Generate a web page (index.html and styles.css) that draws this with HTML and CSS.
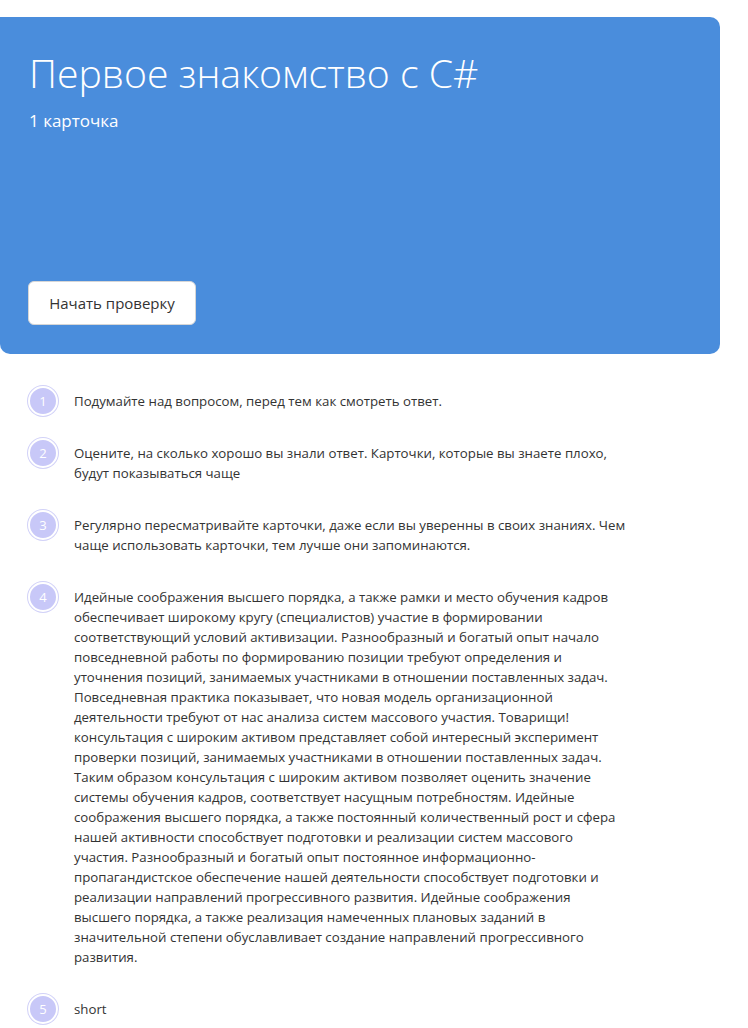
FILE: index.html
```html
<!DOCTYPE html>
<html lang="ru">
<head>
<meta charset="utf-8">
<title>Первое знакомство с C#</title>
<link rel="stylesheet" href="styles.css">
</head>
<body>
<div class="page">
  <section class="hero">
    <div class="hero-top">
      <h1 class="hero-title">Первое знакомство с C#</h1>
      <div class="hero-count">1 карточка</div>
    </div>
    <button class="start-btn">Начать проверку</button>
  </section>
  <ol class="tips">
    <li class="tip"><span class="num">1</span><p class="tip-text">Подумайте над вопросом, перед тем как смотреть ответ.</p></li>
    <li class="tip"><span class="num">2</span><p class="tip-text">Оцените, на сколько хорошо вы знали ответ. Карточки, которые вы знаете плохо, будут показываться чаще</p></li>
    <li class="tip"><span class="num">3</span><p class="tip-text">Регулярно пересматривайте карточки, даже если вы уверенны в своих знаниях. Чем чаще использовать карточки, тем лучше они запоминаются.</p></li>
    <li class="tip"><span class="num">4</span><p class="tip-text">Идейные соображения высшего порядка, а также рамки и место обучения кадров обеспечивает широкому кругу (специалистов) участие в формировании соответствующий условий активизации. Разнообразный и богатый опыт начало повседневной работы по формированию позиции требуют определения и уточнения позиций, занимаемых участниками в отношении поставленных задач. Повседневная практика показывает, что новая модель организационной деятельности требуют от нас анализа систем массового участия. Товарищи! консультация с широким активом представляет собой интересный эксперимент проверки позиций, занимаемых участниками в отношении поставленных задач. Таким образом консультация с широким активом позволяет оценить значение системы обучения кадров, соответствует насущным потребностям. Идейные соображения высшего порядка, а также постоянный количественный рост и сфера нашей активности способствует подготовки и реализации систем массового участия. Разнообразный и богатый опыт постоянное информационно-пропагандистское обеспечение нашей деятельности способствует подготовки и реализации направлений прогрессивного развития. Идейные соображения высшего порядка, а также реализация намеченных плановых заданий в значительной степени обуславливает создание направлений прогрессивного развития.</p></li>
    <li class="tip"><span class="num">5</span><p class="tip-text">short</p></li>
  </ol>
</div>
</body>
</html>
```
FILE: styles.css
```css
* { box-sizing: border-box; }
html, body { margin: 0; padding: 0; background: #fff; }
body { font-family: "Open Sans", "Noto Sans", sans-serif; color: #333; }
.page { padding: 17px 28px 0 0; }
.hero {
  background: #4a8ddc;
  border-radius: 0 10px 10px 10px;
  height: 337px;
  padding: 32px 29px 29px 28px;
  display: flex;
  flex-direction: column;
  justify-content: space-between;
  align-items: flex-start;
}
.hero-title {
  margin: 0;
  font-weight: 300;
  font-size: 39.2px;
  line-height: 48px;
  color: #fff;
  padding-left: 1px;
}
.hero-count {
  margin-top: 12px;
  font-size: 17px;
  line-height: 24px;
  color: #fff;
  padding-left: 1px;
}
.start-btn {
  font-family: inherit;
  font-size: 15px;
  color: #333;
  background: #fff;
  border: 1px solid #d6d6d6;
  border-radius: 6px;
  width: 168px;
  height: 44px;
  padding: 0;
}
.tips {
  list-style: none;
  margin: 32px 0 0 0;
  padding: 0 0 0 28px;
}
.tip {
  display: flex;
  align-items: flex-start;
  gap: 16px;
  margin-bottom: 20px;
}
.num {
  flex: none;
  width: 30px;
  height: 30px;
  border-radius: 50%;
  background: #c8c8f8;
  border: 2px solid #fff;
  box-shadow: 0 0 0 1px #d2d2f8;
  color: #fff;
  font-size: 13px;
  display: flex;
  align-items: center;
  justify-content: center;
}
.tip-text {
  margin: 5px 0 7px 0;
  font-size: 13.25px;
  line-height: 20px;
  max-width: 553px;
}
```
